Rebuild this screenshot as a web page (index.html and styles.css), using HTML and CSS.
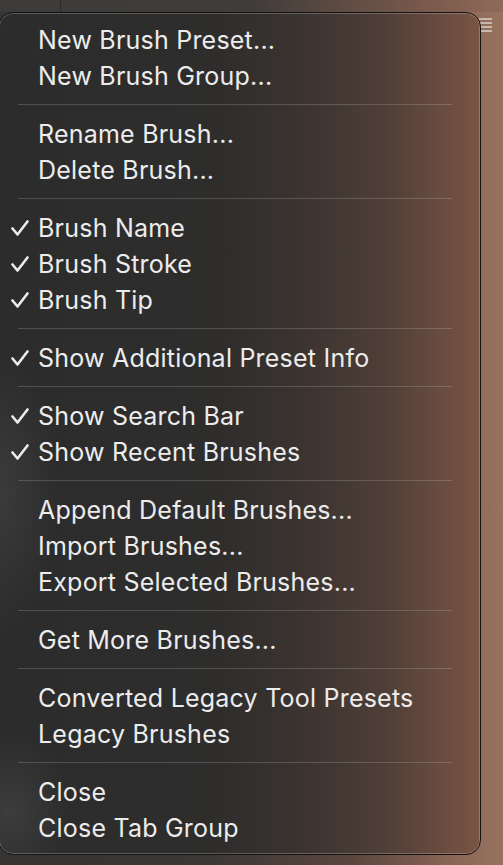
FILE: index.html
```html
<!DOCTYPE html>
<html>
<head>
<meta charset="utf-8">
<link rel="stylesheet" href="styles.css">
</head>
<body>
<div class="backdrop">
  <div class="topbar">
    <div class="tab"></div>
    <div class="hamburger"><span></span><span></span><span></span><span></span></div>
  </div>
  <div class="menu">
    <div class="group">
      <div class="item"><span class="check"></span>New Brush Preset...</div>
      <div class="item"><span class="check"></span>New Brush Group...</div>
    </div>
    <div class="sep"></div>
    <div class="group">
      <div class="item"><span class="check"></span>Rename Brush...</div>
      <div class="item"><span class="check"></span>Delete Brush...</div>
    </div>
    <div class="sep"></div>
    <div class="group">
      <div class="item"><span class="check"><svg viewBox="0 0 18 16"><path d="M1.5 8.5 L6.5 14.5 L16.5 1.5"/></svg></span>Brush Name</div>
      <div class="item"><span class="check"><svg viewBox="0 0 18 16"><path d="M1.5 8.5 L6.5 14.5 L16.5 1.5"/></svg></span>Brush Stroke</div>
      <div class="item"><span class="check"><svg viewBox="0 0 18 16"><path d="M1.5 8.5 L6.5 14.5 L16.5 1.5"/></svg></span>Brush Tip</div>
    </div>
    <div class="sep"></div>
    <div class="group">
      <div class="item"><span class="check"><svg viewBox="0 0 18 16"><path d="M1.5 8.5 L6.5 14.5 L16.5 1.5"/></svg></span>Show Additional Preset Info</div>
    </div>
    <div class="sep"></div>
    <div class="group">
      <div class="item"><span class="check"><svg viewBox="0 0 18 16"><path d="M1.5 8.5 L6.5 14.5 L16.5 1.5"/></svg></span>Show Search Bar</div>
      <div class="item"><span class="check"><svg viewBox="0 0 18 16"><path d="M1.5 8.5 L6.5 14.5 L16.5 1.5"/></svg></span>Show Recent Brushes</div>
    </div>
    <div class="sep"></div>
    <div class="group">
      <div class="item"><span class="check"></span>Append Default Brushes...</div>
      <div class="item"><span class="check"></span>Import Brushes...</div>
      <div class="item"><span class="check"></span>Export Selected Brushes...</div>
    </div>
    <div class="sep"></div>
    <div class="group">
      <div class="item"><span class="check"></span>Get More Brushes...</div>
    </div>
    <div class="sep"></div>
    <div class="group">
      <div class="item"><span class="check"></span>Converted Legacy Tool Presets</div>
      <div class="item"><span class="check"></span>Legacy Brushes</div>
    </div>
    <div class="sep"></div>
    <div class="group">
      <div class="item"><span class="check"></span>Close</div>
      <div class="item"><span class="check"></span>Close Tab Group</div>
    </div>
  </div>
</div>
</body>
</html>
```
FILE: styles.css
```css
html, body {
  margin: 0;
  padding: 0;
}
body {
  width: 503px;
  height: 865px;
  overflow: hidden;
  font-family: Inter, "Noto Sans", sans-serif;
}
.backdrop {
  position: relative;
  width: 503px;
  height: 865px;
  background: linear-gradient(to right, #363534 0%, #3a3736 40%, #5a463d 70%, #8a6656 90%, #97725f 100%);
  display: flex;
  flex-direction: column;
}
.topbar {
  height: 12px;
  display: flex;
  background: linear-gradient(to right, #3d3c3b 0%, #403c3a 50%, #7a5a4c 85%, #8f6a59 100%);
}
.tab {
  width: 60px;
  border-right: 1px solid #2a2a2a;
}
.hamburger {
  position: absolute;
  left: 479px;
  top: 18px;
  width: 13px;
  display: flex;
  flex-direction: column;
  gap: 2px;
}
.hamburger span {
  height: 2px;
  background: #c9b7ae;
}
.menu {
  position: relative;
  z-index: 1;
  margin-left: -2px;
  width: 483px;
  height: 843px;
  box-sizing: border-box;
  padding: 9px 0 8px;
  border-radius: 15px;
  border: 1px solid #151312;
  box-shadow: inset 0 0 0 1px rgba(255, 255, 255, 0.22);
  background:
    radial-gradient(ellipse 60px 140px at 0px 480px, rgba(255,255,255,0.07), transparent),
    radial-gradient(ellipse 60px 80px at 10px 800px, rgba(255,255,255,0.08), transparent),
    linear-gradient(to right, #2c2c2c 0%, #2e2d2c 45%, #3a3330 62%, #4e3e37 80%, #6b4d40 93%, #795442 100%);
  color: #ececec;
  font-size: 25px;
  letter-spacing: 0.22px;
}
.item {
  height: 36px;
  display: flex;
  align-items: center;
  padding-left: 12px;
}
.check {
  width: 27px;
  height: 16px;
  display: flex;
  align-items: center;
}
.check svg {
  width: 18px;
  height: 16px;
  fill: none;
  stroke: #ececec;
  stroke-width: 2.6;
  stroke-linecap: round;
  stroke-linejoin: round;
}
.sep {
  height: 1px;
  margin: 10px 28px 11px 19px;
  background: rgba(255, 255, 255, 0.17);
}
```
